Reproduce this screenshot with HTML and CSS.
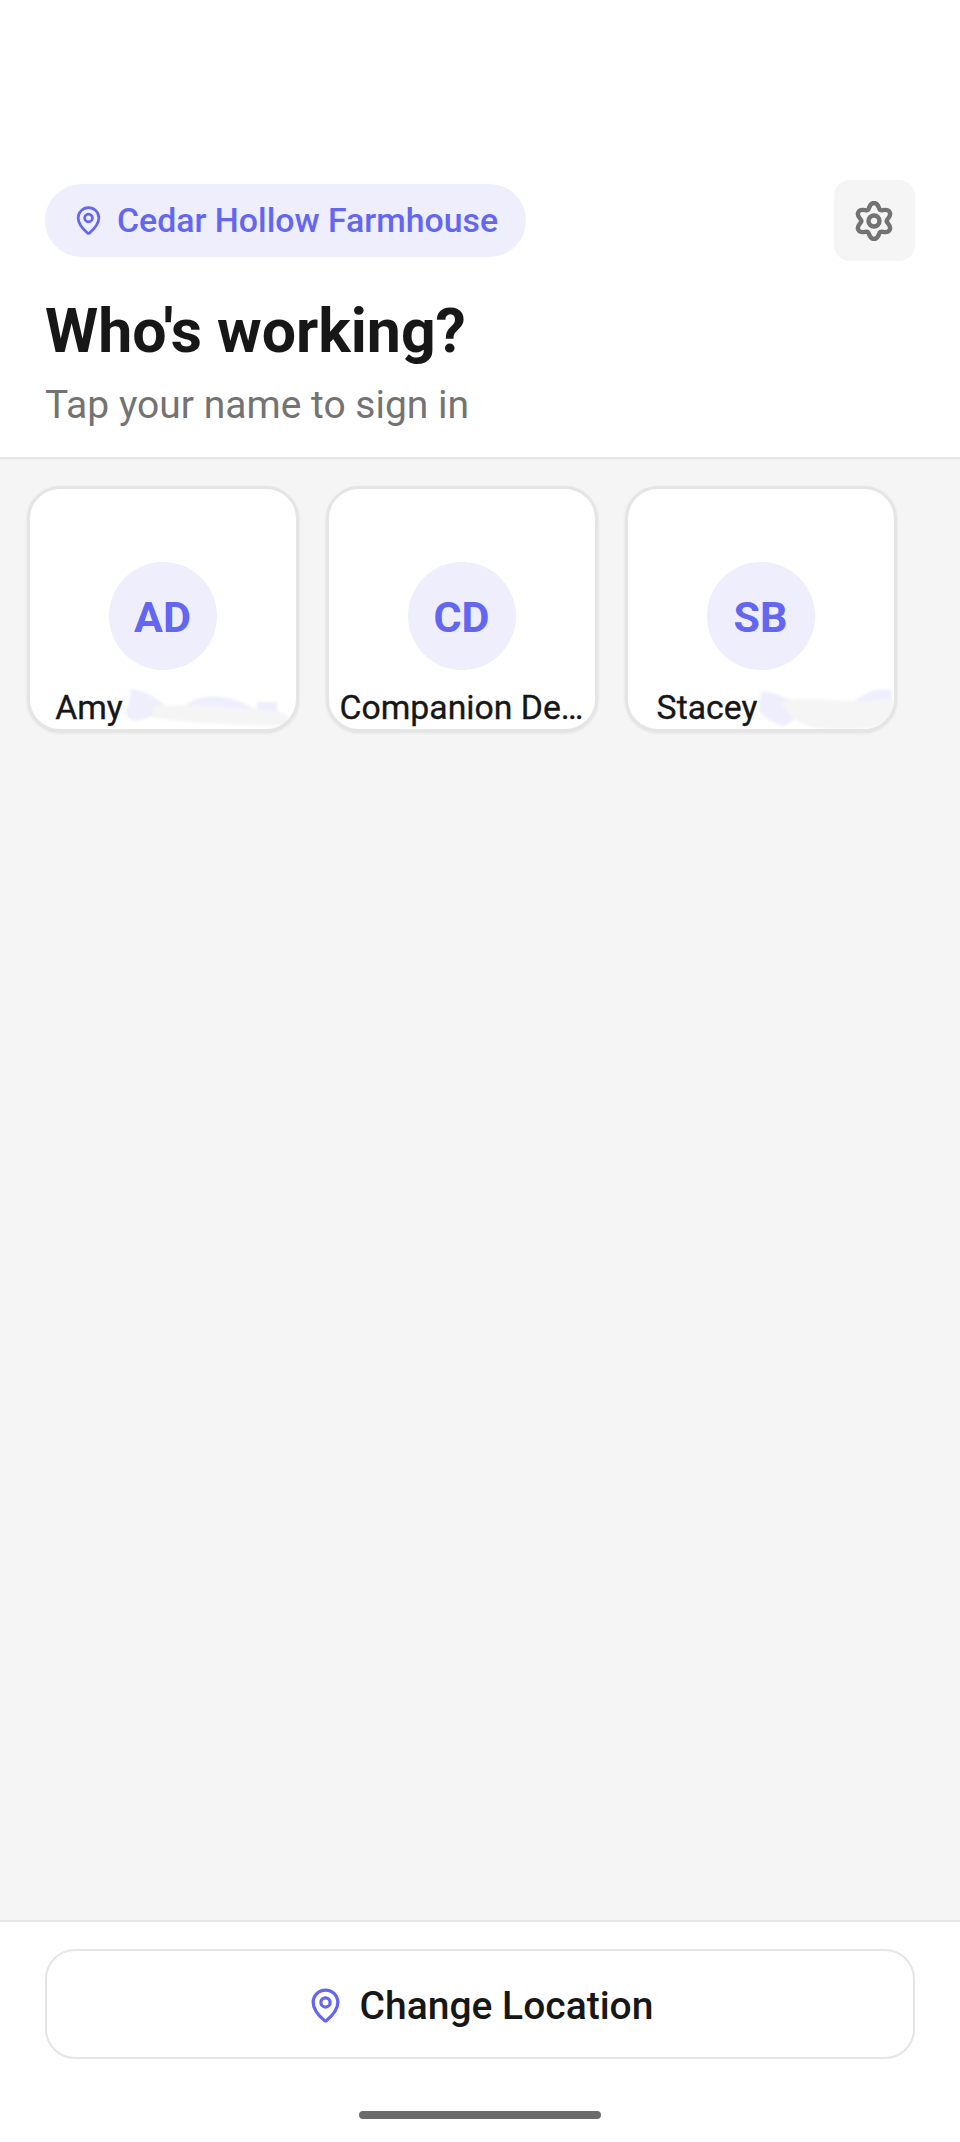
FILE: index.html
```html
<!DOCTYPE html>
<html lang="en">
<head>
<meta charset="utf-8">
<title>Who's working?</title>
<link rel="stylesheet" href="styles.css">
</head>
<body>
<div class="screen">
  <header class="header">
    <div class="top-row">
      <div class="location-pill">
        <svg class="pin pin-small" viewBox="0 0 24 24"><path d="M20 10c0 4.993-5.539 10.193-7.399 11.799a1 1 0 0 1-1.202 0C9.539 20.193 4 14.993 4 10a8 8 0 0 1 16 0"/><circle cx="12" cy="10" r="3"/></svg>
        <span class="location-name">Cedar Hollow Farmhouse</span>
      </div>
      <button class="settings" type="button" aria-label="Settings">
        <svg class="gear" viewBox="-20 -20 40 40"><path d="M0 -18C5 -18 4.52 -11.83 6.25 -10.83C7.98 -9.83 13.09 -13.33 15.59 -9C18.09 -4.67 12.5 -2 12.5 0C12.5 2 18.09 4.67 15.59 9C13.09 13.33 7.98 9.83 6.25 10.83C4.52 11.83 5 18 0 18C-5 18 -4.52 11.83 -6.25 10.83C-7.98 9.83 -13.09 13.33 -15.59 9C-18.09 4.67 -12.5 2 -12.5 0C-12.5 -2 -18.09 -4.67 -15.59 -9C-13.09 -13.33 -7.98 -9.83 -6.25 -10.83C-4.52 -11.83 -5 -18 0 -18Z"/><circle r="5.5"/></svg>
      </button>
    </div>
    <h1 class="title">Who's working?</h1>
    <p class="subtitle">Tap your name to sign in</p>
  </header>

  <main class="staff">
    <article class="card">
      <div class="avatar">AD</div>
      <div class="name">Amy<span class="spacer spacer-amy"></span></div>
      <svg class="smudge" viewBox="0 0 271 246">
        <g class="blur-soft">
          <path class="lav" d="M103 203C118 204 132 213 142 223L120 232C110 237 100 235 99 227C99 220 105 216 103 203Z"/>
          <path class="lav" d="M150 228C165 206 200 204 232 226Z"/>
          <rect class="lav" x="230" y="216" width="20" height="14"/>
          <path class="grey" d="M126 220C170 217 215 223 250 225C258 227 266 232 264 240C230 240 170 238 126 232Z"/>
        </g>
      </svg>
    </article>
    <article class="card">
      <div class="avatar">CD</div>
      <div class="name">Companion De…</div>
    </article>
    <article class="card">
      <div class="avatar">SB</div>
      <div class="name">Stacey<span class="spacer spacer-stacey"></span></div>
      <svg class="smudge" viewBox="0 0 271 246">
        <g class="blur-soft">
          <path class="lav" d="M137 205C155 208 172 216 182 224L160 240C148 238 136 230 133 222Z"/>
          <path class="lav" d="M222 220C238 208 252 202 266 198L268 224Z"/>
          <path class="whitepatch" d="M140 203C170 190 230 198 270 190L270 203C230 206 170 202 140 203Z"/>
          <path class="grey" d="M156 216C190 208 220 220 268 212L270 236C250 244 210 246 195 242C175 240 164 232 156 216Z"/>
        </g>
      </svg>
    </article>
  </main>

  <footer class="footer">
    <button class="change" type="button">
      <svg class="pin pin-large" viewBox="0 0 24 24"><path d="M20 10c0 4.993-5.539 10.193-7.399 11.799a1 1 0 0 1-1.202 0C9.539 20.193 4 14.993 4 10a8 8 0 0 1 16 0"/><circle cx="12" cy="10" r="3"/></svg>
      <span class="change-label">Change Location</span>
    </button>
    <div class="home-bar"></div>
  </footer>
</div>
</body>
</html>
```
FILE: styles.css
```css
* { box-sizing: border-box; }
html, body { margin: 0; padding: 0; }
body { font-family: Roboto, "Noto Sans", sans-serif; background: #fff; }
.screen { display: flex; flex-direction: column; width: 960px; height: 2142px; overflow: hidden; }

.header { height: 459px; padding: 180px 45px 0; background: #fff; border-bottom: 2.75px solid #e5e5e5; }
.top-row { display: flex; justify-content: space-between; align-items: center; height: 81px; }
.location-pill { display: flex; align-items: center; gap: 13px; height: 73px; padding: 0 28px; border-radius: 37px; background: #eeeefd; }
.location-name { font-size: 33.85px; font-weight: 500; color: #6366f1; white-space: nowrap; }
.pin { fill: none; stroke: #6366f1; stroke-width: 2.1; stroke-linecap: round; stroke-linejoin: round; flex: none; }
.pin-small { width: 31px; height: 31px; }
.pin-large { width: 37px; height: 37px; margin-top: 2px; }
.settings { display: flex; align-items: center; justify-content: center; width: 81px; height: 81px; padding: 0 1px 0 0; border: 0; border-radius: 16px; background: #f5f5f5; }
.gear { width: 40px; height: 40px; fill: none; stroke: #737373; stroke-width: 4.4; }
.title { margin: 36px 0 0; font-size: 60.8px; line-height: 70px; font-weight: 700; color: #171717; }
.subtitle { margin: 16px 0 0; font-size: 39px; line-height: 44px; font-weight: 400; color: #737373; }

.staff { flex: 1; display: flex; align-items: flex-start; gap: 27px; padding: 27px 26.5px 0; background: #f5f5f5; }
.card { position: relative; flex: none; display: flex; flex-direction: column; align-items: center; width: 272px; height: 246px; padding: 73px 9px 0; background: #fff; border: 3px solid #e5e5e5; border-radius: 33px; box-shadow: 0 1px 3px rgba(0, 0, 0, .09); overflow: hidden; }
.avatar { display: flex; align-items: center; justify-content: center; flex: none; width: 108px; height: 108px; padding-top: 2px; border-radius: 50%; background: #eeeefd; color: #6366f1; font-size: 43px; font-weight: 700; }
.name { width: 100%; margin-top: 18px; font-size: 33.75px; line-height: 40px; font-weight: 400; -webkit-text-stroke: .35px #171717; color: #171717; text-align: center; white-space: nowrap; }
.spacer { display: inline-block; }
.spacer-amy { width: 147px; }
.spacer-stacey { width: 107px; }
.smudge { position: absolute; left: -3px; top: -3px; width: 271px; height: 246px; pointer-events: none; }
.blur-soft { filter: blur(1.5px); }
.lav { fill: #eeeefd; }
.grey { fill: #f5f5f6; }
.whitepatch { fill: #fff; }

.footer { display: flex; flex-direction: column; align-items: center; height: 222px; padding: 27px 45px 0; background: #fff; border-top: 2.75px solid #e5e5e5; }
.change { display: flex; align-items: center; justify-content: center; gap: 16px; width: 100%; height: 110px; flex: none; padding: 0; background: #fff; border: 2.75px solid #e5e5e5; border-radius: 30px; font-family: inherit; color: #171717; }
.change-label { font-size: 39px; font-weight: 500; position: relative; top: 2px; }
.home-bar { width: 242px; height: 8px; margin-top: 52px; border-radius: 4px; background: #6b6b6b; flex: none; }
```
